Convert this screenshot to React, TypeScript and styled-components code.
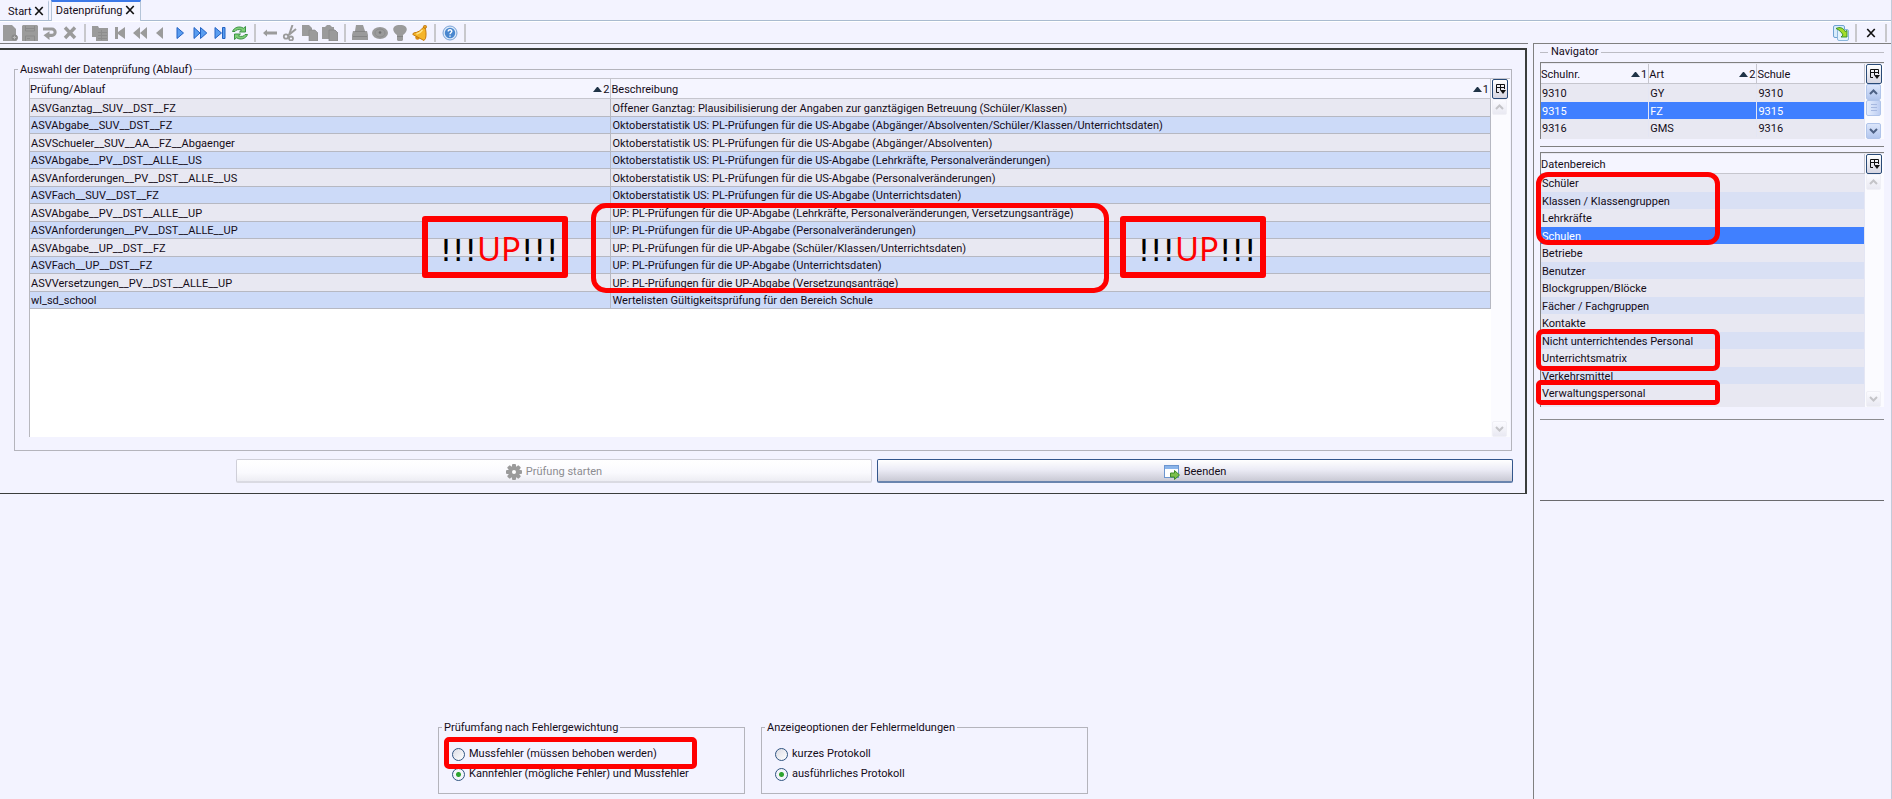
import React from "react";
import styled, { createGlobalStyle } from "styled-components";

const Global = createGlobalStyle`
  * { box-sizing: border-box; }
  body {
    margin: 0;
    background: #f3f3ff;
    color: #140c18;
    font: 11px/16px Roboto, "Noto Sans", sans-serif;
  }
  button, input { font: inherit; color: inherit; margin: 0; }
`;

const Window = styled.div`
  display: flex;
  flex-direction: column;
  min-height: 100vh;
  border-right: 1px solid #c3cbd9;
`;

/* ---- tabs ---- */
const TabBar = styled.nav`
  display: flex;
  height: 21px;
  border-bottom: 1px solid #a9bbd0;
`;

const Tab = styled.div<{ $active?: boolean }>`
  display: flex;
  align-items: center;
  gap: 2px;
  height: ${(p) => (p.$active ? 21 : 20)}px;
  padding: ${(p) => (p.$active ? "0 5px 3px 4px" : "0 4px 1px 8px")};
  border-top: 2px solid ${(p) => (p.$active ? "#3b78e7" : "transparent")};
  border-right: 1px solid #b4c4d8;
  border-left: ${(p) => (p.$active ? "1px solid #b4c4d8" : "0")};
  background: ${(p) => (p.$active ? "#f6f6ff" : "transparent")};
  margin-right: ${(p) => (p.$active ? 0 : 2)}px;
`;

const PlainButton = styled.button`
  display: flex;
  align-items: center;
  justify-content: center;
  padding: 0;
  border: 0;
  background: none;
`;

const TabLabel = styled(PlainButton)`
  padding-top: 2px;
`;

/* ---- tool bar ---- */
const Toolbar = styled.div`
  display: flex;
  align-items: center;
  height: 22px;
  border-top: 1px solid #fff;
`;

const ToolButton = styled(PlainButton)`
  width: 20px;
  height: 20px;
`;

const Separator = styled.span`
  width: 2px;
  height: 18px;
  margin: 0 4px;
  background: #c8c8cc;
`;

const Spacer = styled.span`
  flex: 1;
`;

/* ---- page body ---- */
const Body = styled.div`
  display: flex;
  flex: 1;
  gap: 5px;
`;

const Main = styled.main`
  display: flex;
  flex: 1;
  min-width: 0;
  flex-direction: column;
  padding-top: 4px;
  border-top: 1px solid #7c7c80;
`;

const Panel = styled.section`
  margin-right: 1px;
  padding: 11px 13px 10px 0;
  border: solid #3a3d3c;
  border-width: 2px 2px 1px 0;
`;

const Group = styled.fieldset`
  min-width: 0;
  margin: 0;
  padding: 0;
  border: 1px solid #b4b4bc;
`;

const Legend = styled.legend`
  margin-left: 3px;
  padding: 2px 2px 0;
  line-height: 14px;
`;

const CheckGroup = styled(Group)`
  margin-left: 14px;
`;

const CheckArea = styled.div`
  padding: 1px 1px 13px 14px;
`;

const Pane = styled.div<{ $height: number; $white?: boolean; $sunken?: boolean }>`
  position: relative;
  display: flex;
  height: ${(p) => p.$height}px;
  padding-top: ${(p) => (p.$sunken ? 1 : 0)}px;
  border-top: 1px solid ${(p) => (p.$sunken ? "#808080" : "#c4c4cc")};
  border-left: 1px solid ${(p) => (p.$sunken ? "#808080" : "#b8b8be")};
  background: ${(p) => (p.$white ? "#fff" : "#e8e8f2")};
`;

const Grid = styled.table`
  flex: 1;
  width: 100%;
  height: max-content;
  table-layout: fixed;
  border-collapse: separate;
  border-spacing: 0;
`;

const HeadCell = styled.th<{ $width?: string }>`
  width: ${(p) => p.$width ?? "auto"};
  height: 20px;
  padding: 2px 1px 0 0;
  border-right: 1px solid #c6c6ce;
  border-bottom: 1px solid #c6c6ce;
  background: #f5f5ff;
  font-weight: 400;
  text-align: left;
`;

const HeadContent = styled.div`
  display: flex;
  align-items: center;
  justify-content: space-between;
`;

const Sort = styled.span`
  display: flex;
  align-items: center;
  gap: 1px;
`;

const Row = styled.tr<{ $selected?: boolean; $lined?: boolean }>`
  height: 18px;
  background: ${(p) => (p.$selected ? "#4080ff" : "#e8e8f2")};
  color: ${(p) => (p.$selected ? "#fff" : "inherit")};
  &:nth-child(even) {
    height: 17px;
    background: ${(p) => (p.$selected ? "#4080ff" : p.$lined ? "#ccdaf8" : "#d9e0f4")};
  }
  td {
    border-bottom: ${(p) => (p.$lined ? "1px solid #b6b8c2" : "0")};
    border-right: ${(p) => (p.$lined ? "1px solid #b6b8c2" : "1px solid #e4e6f4")};
  }
`;

const Cell = styled.td`
  overflow: hidden;
  padding: 2px 1px 0;
  line-height: 14px;
  white-space: nowrap;
`;

const ScrollColumn = styled.div`
  display: flex;
  flex-direction: column;
  width: 19px;
  padding: 0 2px 0 1px;
  background: #fbfbff;
`;

const ColumnButton = styled(PlainButton)`
  width: 16px;
  height: 20px;
  flex: none;
  border: 1px solid #294a77;
  border-radius: 2px;
  background: linear-gradient(#fff, #d6d6e2);
`;

const ScrollButton = styled(PlainButton)<{ $on?: boolean }>`
  width: 15px;
  height: 16px;
  flex: none;
  border: 1px solid ${(p) => (p.$on ? "#b0c4ea" : "#f0f0f6")};
  border-radius: 2px;
  background: ${(p) => (p.$on ? "linear-gradient(#dce6fb, #b2c6ee)" : "linear-gradient(#fbfbff, #e9e9f2)")};
`;

const Track = styled.div`
  flex: 1;
`;

const Thumb = styled.div`
  width: 15px;
  height: 16px;
  border: 1px solid #b0c4ea;
  border-radius: 2px;
  background: repeating-linear-gradient(#a6b8e0 0 1px, transparent 1px 3px) 4px 3px / 6px 9px no-repeat,
    linear-gradient(90deg, #e6eefd, #bccdf2);
`;

const ButtonRow = styled.div`
  display: flex;
  gap: 5px;
  margin-top: 8px;
  padding-left: 236px;
  margin-right: -1px;
`;

const ActionButton = styled.button`
  display: flex;
  flex: 1;
  height: 24px;
  align-items: center;
  justify-content: center;
  gap: 4px;
  padding: 2px 0 0;
  border: 1px solid #33568c;
  border-bottom: 2px solid #6a84ae;
  border-radius: 2px;
  background: linear-gradient(#fff, #ececf6 45%, #c9c9d4);
  &:disabled {
    border: 1px solid #cfcfd8;
    border-bottom: 2px solid #dadae2;
    background: linear-gradient(#fff, #fafafe 60%, #ededf3);
    color: #8c8c90;
  }
`;

/* ---- option groups ---- */
const Options = styled.div`
  display: flex;
  justify-content: center;
  gap: 16px;
  margin-top: auto;
  padding: 0 2px 5px 0;
`;

const OptionGroup = styled(Group)<{ $width: number }>`
  width: ${(p) => p.$width}px;
  height: 75px;
`;

const OptionArea = styled.div`
  position: relative;
  padding: 10px 0 0 13px;
`;

const Radio = styled.label`
  display: flex;
  align-items: center;
  gap: 4px;
  height: 18px;
  margin-bottom: 2px;
  input {
    appearance: none;
    width: 13px;
    height: 13px;
    border: 1px solid #2f5480;
    border-radius: 50%;
    background: linear-gradient(135deg, #dcdce4, #fff);
  }
  input:checked {
    background: radial-gradient(circle, #2ea32e 0 2px, #fff0 3px), #f4f4fa;
  }
`;

/* ---- navigator ---- */
const Aside = styled.aside`
  width: 358px;
  padding: 0 7px 0 6px;
  border-top: 1px solid #808080;
  border-left: 1px solid #808080;
`;

const AsideTitle = styled.h2`
  display: flex;
  align-items: center;
  gap: 3px;
  margin: 0 0 2px;
  font-size: 11px;
  font-weight: 400;
  &::before, &::after {
    content: "";
    width: 8px;
    height: 1px;
    background: #bcbcc4;
  }
  &::after { flex: 1; }
`;

const Section = styled.div<{ $height: number; $dark?: boolean }>`
  height: ${(p) => p.$height}px;
  border-top: 1px solid ${(p) => (p.$dark ? "#6a6a6e" : "#8c8c90")};
`;

const DataArea = styled.div`
  margin: 7px 0 12px;
  padding-top: 5px;
  border-top: 1px solid #808080;
`;

/* ---- red markers over the content ---- */
const Marker = styled.div<{ $x: string; $y: number; $w: string; $h: number; $r: number; $b?: number }>`
  position: absolute;
  left: ${(p) => p.$x};
  top: ${(p) => p.$y}px;
  width: ${(p) => p.$w};
  height: ${(p) => p.$h}px;
  border: ${(p) => p.$b ?? 5}px solid #f00;
  border-radius: ${(p) => p.$r}px;
  pointer-events: none;
`;

const Shout = styled(Marker)`
  display: flex;
  align-items: center;
  justify-content: center;
  padding: 4px 0 0 8px;
  color: #000;
  font: 31px/40px "DejaVu Sans", sans-serif;
  em {
    color: #f00;
    font: 33px/40px "Noto Sans", sans-serif;
  }
`;

/* ---- icons ---- */
const Svg = ({ children, size = 16 }: { children: React.ReactNode; size?: number }) => (
  <svg width={size} height={size} viewBox="0 0 16 16" aria-hidden="true">{children}</svg>
);
const G = "#9b9b9b";
const BLUE = { fill: "#5a9df0", stroke: "#2363c4", strokeWidth: 1, strokeLinejoin: "round" as const };

const icons: Record<string, React.ReactNode> = {
  Neu: <><path d="M1 0h9l4 4v6a3 3 0 1 1-3 6H1z" fill={G} /><circle cx="12.5" cy="12.5" r="3" fill="#8a8a8a" /><path d="M12.5 10.8v3.4M10.8 12.500h3.4" stroke="#b8b8b8" /></>,
  Speichern: <><path d="M1 0h14l1 1v15H0V1z" fill={G} /><path d="M3.500 1v5h9V1M3.500 16v-5h9v5M3 3.500h10M5 13.500h3" fill="none" stroke="#8b8b8b" /></>,
  Zurücksetzen: <path d="M1 2.500h9a4.700 4.700 0 0 1 0 9.400H7.500v3L1.500 10.300l6-4v2.500H10a1.600 1.600 0 0 0 0-3.200H1z" fill={G} />,
  Löschen: <path d="M3 2.500l10 10.500M13 2.500L3 13" fill="none" stroke={G} strokeWidth="3.400" />,
  Liste: <><path d="M0 1h6l1 2h9v13H4v-4H0z" fill={G} /><path d="M6 7.500h9M6 10.500h9M6 13.500h9M9.500 5v10" stroke="#8d8d8d" /></>,
  Erster: <path d="M3 2h3v5l7-5v12L6 9v5H3z" fill={G} />,
  Schnell_zurück: <path d="M8 2v12L1 8zM15 2v12L8 8z" fill={G} />,
  Vorheriger: <path d="M11 2v12L4 8z" fill={G} />,
  Nächster: <path d="M5 2.500v11L11.500 8z" {...BLUE} />,
  Schnell_vor: <path d="M2 2.500v11L8 8zM8.500 2.500v11L14.800 8z" {...BLUE} />,
  Letzter: <path d="M3 2.500v11L9.500 8zM10.500 2.500h2.500v11h-2.500z" {...BLUE} />,
  Aktualisieren: <g fill="#7fcf78" stroke="#2f8a3a" strokeWidth="0.900" strokeLinejoin="round"><path d="M0.500 6.500C2 2.500 7 0.500 11.500 3.200l2-1.700V7H7.500l2-1.800C7 4 4 4.500 3 6.500z" /><path d="M15.500 9.500C14 13.500 9 15.500 4.500 12.800l-2 1.700V9h6l-2 1.800C9 12 12 11.500 13 9.500z" /></g>,
  Rückgängig: <path d="M1 8l4-3.500v2h10v3H5v2z" fill={G} />,
  Ausschneiden: <><path d="M10.500 0L7 10M14 4L5.500 11" stroke={G} strokeWidth="2" /><g fill="none" stroke={G} strokeWidth="1.800"><circle cx="4" cy="11.500" r="2.200" /><circle cx="9" cy="13.500" r="2" /></g></>,
  Kopieren: <><path d="M0 0h7l3 3v8H0z" fill={G} /><path d="M7 5h6l3 3v8H7z" fill={G} stroke="#888" strokeWidth="0.600" /></>,
  Einfügen: <><path d="M0 2h3l2-2h3l2 2h2v12H0z" fill={G} /><path d="M7 5h6l3 3v8H7z" fill={G} stroke="#858585" strokeWidth="0.800" /></>,
  Drucken: <><path d="M4 0h7l2 6h2l1 4v5H0v-5l1-4h2z" fill={G} /><path d="M3 6.500h10M1 11.500h14" stroke="#858585" /></>,
  Ansicht: <><ellipse cx="8" cy="8" rx="8" ry="6" fill={G} /><ellipse cx="8" cy="8" rx="5" ry="4" fill="none" stroke="#8c8c8c" /><circle cx="8" cy="7.500" r="1.300" fill="#707070" /></>,
  Hinweis: <><path d="M8 0c9 0 8 7 3 10v5l-1 1H6l-1-1v-5C0 7-1 0 8 0z" fill={G} /><path d="M5 11.500h6" stroke="#858585" /></>,
  Glocke: <><circle cx="5.500" cy="12.500" r="2.200" fill="#d98c12" /><path d="M13 2c1 3.500 1.500 8 .5 11.500l-1.500 2L.8 9.500 1.500 8C6 7.500 9 5.500 11 2.500z" fill="#f5b52a" stroke="#c67a0a" strokeLinejoin="round" /><path d="M10.500 5c-1.500 2-3.500 3.200-6 4" fill="none" stroke="#ffe58a" strokeWidth="1.500" /><circle cx="13" cy="1.800" r="1.600" fill="#e8a020" stroke="#b96f08" strokeWidth="0.700" /></>,
  Hilfe: <><circle cx="8" cy="8" r="7" fill="#dbe8f8" stroke="#7ba3d6" /><circle cx="8" cy="8" r="5.200" fill="#4a87cf" /><path d="M6.200 6.500c0-2.500 3.800-2.300 3.600 0C9.700 7.700 8 7.800 8 9.200M8 10.500v1.300" fill="none" stroke="#fff" strokeWidth="1.400" /></>,
};

const Tool = ({ name }: { name: string }) => (
  <ToolButton type="button" aria-label={name.replace("_", " ")}><Svg>{icons[name]}</Svg></ToolButton>
);

const Cross = ({ size = 10 }: { size?: number }) => (
  <Svg size={size}><path d="M2 1.500l12 13M14 1.500l-12 13" stroke="#111" strokeWidth="2.600" /></Svg>
);

const SortMark = ({ order }: { order: number }) => (
  <Sort>
    <svg width="9" height="5" viewBox="0 0 9 5" aria-hidden="true"><path d="M0 5l4-5h1l4 5z" fill="#1f3347" /></svg>
    {order}
  </Sort>
);

const ColumnsButton = () => (
  <ColumnButton type="button" aria-label="Spalten">
    <svg width="11" height="12" viewBox="0 0 11 12" fill="none" stroke="#111" aria-hidden="true">
      <path d="M4 9.500H1.500V1.500h8V6M1 4.500h9M5.500 1v6" /><path d="M5 7h6l-3 4z" fill="#111" stroke="none" />
    </svg>
  </ColumnButton>
);

const Arrow = ({ up, on }: { up?: boolean; on?: boolean }) => (
  <ScrollButton type="button" $on={on} aria-label={up ? "Nach oben" : "Nach unten"}>
    <svg width="9" height="6" viewBox="0 0 9 6" aria-hidden="true">
      <path d={up ? "M1 5l3.500-3.500L8 5" : "M1 1l3.500 3.500L8 1"} fill="none" stroke={on ? "#4d6185" : "#c4c4c8"} strokeWidth="2" />
    </svg>
  </ScrollButton>
);

const Scroll = ({ on }: { on?: boolean }) => (
  <ScrollColumn>
    <ColumnsButton />
    <Arrow up on={on} />
    {on && <Thumb />}
    <Track />
    <Arrow on={on} />
  </ScrollColumn>
);

/* ---- data ---- */
const checks = [
  ["ASVGanztag__SUV__DST__FZ", "Offener Ganztag: Plausibilisierung der Angaben zur ganztägigen Betreuung (Schüler/Klassen)"],
  ["ASVAbgabe__SUV__DST__FZ", "Oktoberstatistik US: PL-Prüfungen für die US-Abgabe (Abgänger/Absolventen/Schüler/Klassen/Unterrichtsdaten)"],
  ["ASVSchueler__SUV__AA__FZ__Abgaenger", "Oktoberstatistik US: PL-Prüfungen für die US-Abgabe (Abgänger/Absolventen)"],
  ["ASVAbgabe__PV__DST__ALLE__US", "Oktoberstatistik US: PL-Prüfungen für die US-Abgabe (Lehrkräfte, Personalveränderungen)"],
  ["ASVAnforderungen__PV__DST__ALLE__US", "Oktoberstatistik US: PL-Prüfungen für die US-Abgabe (Personalveränderungen)"],
  ["ASVFach__SUV__DST__FZ", "Oktoberstatistik US: PL-Prüfungen für die US-Abgabe (Unterrichtsdaten)"],
  ["ASVAbgabe__PV__DST__ALLE__UP", "UP: PL-Prüfungen für die UP-Abgabe (Lehrkräfte, Personalveränderungen, Versetzungsanträge)"],
  ["ASVAnforderungen__PV__DST__ALLE__UP", "UP: PL-Prüfungen für die UP-Abgabe (Personalveränderungen)"],
  ["ASVAbgabe__UP__DST__FZ", "UP: PL-Prüfungen für die UP-Abgabe (Schüler/Klassen/Unterrichtsdaten)"],
  ["ASVFach__UP__DST__FZ", "UP: PL-Prüfungen für die UP-Abgabe (Unterrichtsdaten)"],
  ["ASVVersetzungen__PV__DST__ALLE__UP", "UP: PL-Prüfungen für die UP-Abgabe (Versetzungsanträge)"],
  ["wl_sd_school", "Wertelisten Gültigkeitsprüfung für den Bereich Schule"],
];

const schools = [["9310", "GY"], ["9315", "FZ"], ["9316", "GMS"]];

const areas = [
  "Schüler", "Klassen / Klassengruppen", "Lehrkräfte", "Schulen", "Betriebe", "Benutzer", "Blockgruppen/Blöcke",
  "Fächer / Fachgruppen", "Kontakte", "Nicht unterrichtendes Personal", "Unterrichtsmatrix", "Verkehrsmittel",
  "Verwaltungspersonal",
];

export default function App() {
  return (
    <Window>
      <Global />
      <TabBar>
        <Tab><TabLabel type="button">Start</TabLabel><PlainButton type="button" aria-label="Start schließen"><Cross /></PlainButton></Tab>
        <Tab $active><TabLabel type="button">Datenprüfung</TabLabel><PlainButton type="button" aria-label="Datenprüfung schließen"><Cross /></PlainButton></Tab>
      </TabBar>
      <Toolbar>
        {["Neu", "Speichern", "Zurücksetzen", "Löschen"].map((n) => <Tool key={n} name={n} />)}
        <Separator />
        {["Liste", "Erster", "Schnell_zurück", "Vorheriger", "Nächster", "Schnell_vor", "Letzter", "Aktualisieren"].map((n) => <Tool key={n} name={n} />)}
        <Separator />
        {["Rückgängig", "Ausschneiden", "Kopieren", "Einfügen"].map((n) => <Tool key={n} name={n} />)}
        <Separator />
        {["Drucken", "Ansicht", "Hinweis", "Glocke"].map((n) => <Tool key={n} name={n} />)}
        <Separator />
        <Tool name="Hilfe" />
        <Separator />
        <Spacer />
        <ToolButton type="button" aria-label="Navigator aktualisieren">
          <Svg>
            <rect x="0.500" y="0.500" width="11" height="12" rx="1.500" fill="#d8ecfb" stroke="#6fa3d2" />
            <rect x="4.500" y="4.500" width="11" height="11" rx="1.500" fill="#e4f2fc" stroke="#8bb6dc" />
            <path d="M3 3.500c4-2 7.500-.5 9 3l2-1v6.500H8l2-2C8.800 7.500 6.500 5 3 3.500z" fill="#a4dc28" stroke="#2f8a2a" strokeWidth="0.900" />
          </Svg>
        </ToolButton>
        <Separator />
        <ToolButton type="button" aria-label="Schließen"><Cross /></ToolButton>
        <Separator />
      </Toolbar>
      <Body>
        <Main>
          <Panel>
            <CheckGroup>
              <Legend>Auswahl der Datenprüfung (Ablauf)</Legend>
              <CheckArea>
                <Pane $height={359} $white>
                  <Grid>
                    <thead>
                      <tr>
                        <HeadCell $width="39.8%"><HeadContent>Prüfung/Ablauf<SortMark order={2} /></HeadContent></HeadCell>
                        <HeadCell><HeadContent>Beschreibung<SortMark order={1} /></HeadContent></HeadCell>
                      </tr>
                    </thead>
                    <tbody>
                      {checks.map(([id, text]) => (
                        <Row key={id} $lined><Cell>{id}</Cell><Cell>{text}</Cell></Row>
                      ))}
                    </tbody>
                  </Grid>
                  <Scroll />
                  <Shout $x="calc(40% - 200px)" $y={137} $w="146px" $h={62} $r={3} $b={6}><span>!!!<em>UP</em>!!!</span></Shout>
                  <Marker $x="calc(40% - 31px)" $y={124} $w="518px" $h={90} $r={15} />
                  <Shout $x="calc(40% + 498px)" $y={137} $w="146px" $h={62} $r={3} $b={6}><span>!!!<em>UP</em>!!!</span></Shout>
                </Pane>
              </CheckArea>
            </CheckGroup>
            <ButtonRow>
              <ActionButton type="button" disabled>
                <Svg>
                  <g fill={G}><circle cx="8" cy="8" r="6" />
                    {[0, 45, 90, 135].map((a) => <rect key={a} x="6" y="0" width="4" height="16" rx="1" transform={`rotate(${a} 8 8)`} />)}
                  </g>
                  <circle cx="8" cy="8" r="2" fill="#fff" />
                </Svg>
                Prüfung starten
              </ActionButton>
              <ActionButton type="button">
                <Svg>
                  <rect x="0.500" y="1.500" width="14" height="12" fill="#fff" stroke="#6c95cf" /><path d="M1 2h13v3H1z" fill="#8ab4ea" />
                  <path d="M6.500 9h4V6.500L15.500 11l-5 4.500V13h-4z" fill="#7cc04c" stroke="#3d8a26" />
                </Svg>
                Beenden
              </ActionButton>
            </ButtonRow>
          </Panel>
          <Options>
            <OptionGroup $width={307}>
              <Legend>Prüfumfang nach Fehlergewichtung</Legend>
              <OptionArea>
                <Radio><input type="radio" name="scope" />Mussfehler (müssen behoben werden)</Radio>
                <Radio><input type="radio" name="scope" defaultChecked />Kannfehler (mögliche Fehler) und Mussfehler</Radio>
                <Marker $x="5px" $y={2} $w="253px" $h={32} $r={5} />
              </OptionArea>
            </OptionGroup>
            <OptionGroup $width={327}>
              <Legend>Anzeigeoptionen der Fehlermeldungen</Legend>
              <OptionArea>
                <Radio><input type="radio" name="view" />kurzes Protokoll</Radio>
                <Radio><input type="radio" name="view" defaultChecked />ausführliches Protokoll</Radio>
              </OptionArea>
            </OptionGroup>
          </Options>
        </Main>
        <Aside>
          <AsideTitle>Navigator</AsideTitle>
          <Pane $height={77} $sunken>
            <Grid>
              <thead>
                <tr>
                  <HeadCell $width="33.4%"><HeadContent>Schulnr.<SortMark order={1} /></HeadContent></HeadCell>
                  <HeadCell $width="33.4%"><HeadContent>Art<SortMark order={2} /></HeadContent></HeadCell>
                  <HeadCell>Schule</HeadCell>
                </tr>
              </thead>
              <tbody>
                {schools.map(([nr, kind]) => (
                  <Row key={nr} $selected={nr === "9315"}><Cell>{nr}</Cell><Cell>{kind}</Cell><Cell>{nr}</Cell></Row>
                ))}
              </tbody>
            </Grid>
            <Scroll on />
          </Pane>
          <DataArea>
            <Pane $height={255} $sunken>
              <Grid>
                <thead><tr><HeadCell>Datenbereich</HeadCell></tr></thead>
                <tbody>
                  {areas.map((a) => <Row key={a} $selected={a === "Schulen"}><Cell>{a}</Cell></Row>)}
                </tbody>
              </Grid>
              <Scroll />
              <Marker $x="-5px" $y={19} $w="184px" $h={73} $r={12} />
              <Marker $x="-5px" $y={176} $w="184px" $h={42} $r={7} />
              <Marker $x="-5px" $y={227} $w="184px" $h={25} $r={5} />
            </Pane>
          </DataArea>
          <Section $height={81} />
          <Section $height={20} $dark />
        </Aside>
      </Body>
    </Window>
  );
}
